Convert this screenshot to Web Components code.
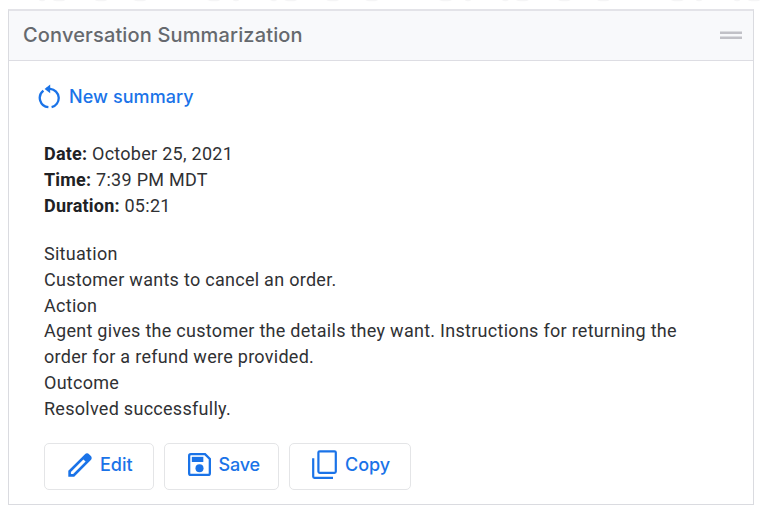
<!DOCTYPE html>
<html lang="en">
<head>
<meta charset="utf-8">
<title>Conversation Summarization</title>
<style>
html,body{margin:0;width:760px;height:512px;overflow:hidden;background:#fff}
</style>
</head>
<body>
<summary-page></summary-page>
<script>
const define = (name, html) => customElements.define(name, class extends HTMLElement {
  constructor() {
    super();
    const t = document.createElement('template');
    t.innerHTML = html;
    this.attachShadow({mode: 'open'}).append(t.content.cloneNode(true));
  }
});

define('dot-edge', `
<style>:host{display:block;height:9px}svg{display:block}</style>
<svg width="760" height="9"><defs><pattern id="d" width="231.7" height="9" patternUnits="userSpaceOnUse">
<g fill="#f5f5f6"><ellipse cx="42" rx="3" ry="1.3"/><ellipse cx="59" rx="6" ry="1.3"/><ellipse cx="101" rx="6" ry="1.3"/><ellipse cx="140" rx="6" ry="1.3"/><ellipse cx="214" rx="6" ry="1.3"/></g></pattern></defs>
<rect x="20" width="740" height="9" fill="url(#d)"/><g fill="#f5f5f6"><ellipse cx="236" rx="3" ry="1.3"/><ellipse cx="468" rx="3" ry="1.3"/><ellipse cx="699" rx="3" ry="1.3"/></g></svg>`);

define('panel-header', `
<style>
:host{display:flex;justify-content:space-between;align-items:center;height:49px;padding:0 11px 0 14px;background:#f8f9fb;border-bottom:1px solid #dddde3;box-sizing:content-box}
h1{margin:0;font:500 20px/49px Inter,"Liberation Sans",sans-serif;color:#66696e;letter-spacing:.15px}
.grip{display:grid;gap:2px;width:22px;margin-bottom:2px}
i{box-sizing:border-box;height:3px;background:#c1c1c7;border-top:1px solid #dcdde1}
</style>
<h1><slot></slot></h1><div class="grip"><i></i><i></i></div>`);

define('new-summary', `
<style>
:host{display:flex;align-items:center;height:26px;gap:8px;font:500 18px/26px Inter,"Liberation Sans",sans-serif;color:#1a73e8;letter-spacing:.08px}
svg{display:block}
</style>
<svg width="23" height="26" viewBox="0 0 23 26" fill="none" stroke="#1a73e8" stroke-width="2.3"><path d="M5.4 6.6A9.3 9.3 0 0 0 10.4 23.2M13.6 23.2A9.3 9.3 0 0 0 12.2 4.9H8"/><path d="M12.2.6V9.2L6.6 4.9Z" fill="#1a73e8" stroke="none"/></svg>
<span><slot></slot></span>`);

define('summary-line', `
<style>:host{display:block;height:25.75px;line-height:25.75px;white-space:nowrap}</style>
<slot></slot>`);

define('action-button', `
<style>
:host{display:flex;box-sizing:border-box;height:47px;border:1.5px solid #e4e5e7;border-radius:5px;align-items:center;font:500 18px/26px Inter,"Liberation Sans",sans-serif;color:#1a73e8}
.label{margin-bottom:3px;white-space:nowrap}
::slotted(svg){display:block;margin-bottom:3px}
</style>
<slot name="icon"></slot><span class="label"><slot></slot></span>`);

define('summary-page', `
<style>
:host{display:block;width:760px;height:512px}
.panel{box-sizing:border-box;width:746px;height:496px;margin-left:8px;border:1px solid #dadbe0;border-top:2px solid #e3e3e8}
.new{margin:23px 0 0 29px}
.text{margin:31.4px 0 0 35px;font:400 18px/25.75px Roboto,"Liberation Sans",sans-serif;color:#303134;letter-spacing:.28px}
.gap{margin-top:22.4px}
b{letter-spacing:.2px;color:#202124}
.actions{display:flex;gap:10px;margin:21.7px 0 0 35px}
.edit{width:110px;padding-left:23px;gap:8px}
.save{width:115px;padding-left:23px;gap:7.5px;letter-spacing:-.2px}
.copy{width:122px;padding-left:22px;gap:8px}
</style>
<dot-edge></dot-edge>
<div class="panel">
<panel-header>Conversation Summarization</panel-header>
<new-summary class="new">New summary</new-summary>
<div class="text">
<summary-line><b>Date:</b> October 25, 2021</summary-line>
<summary-line><b>Time:</b> 7:39 PM MDT</summary-line>
<summary-line><b>Duration:</b> 05:21</summary-line>
<summary-line class="gap">Situation</summary-line>
<summary-line>Customer wants to cancel an order.</summary-line>
<summary-line>Action</summary-line>
<summary-line>Agent gives the customer the details they want. Instructions for returning the</summary-line>
<summary-line>order for a refund were provided.</summary-line>
<summary-line>Outcome</summary-line>
<summary-line>Resolved successfully.</summary-line>
</div>
<div class="actions">
<action-button class="edit"><svg slot="icon" width="24" height="24" viewBox="0 0 24 24"><path fill="#1a73e8" fill-rule="evenodd" d="M.3 17.8V23.7H6.2L22.6 7.3Q24.8 4.9 22.6 2.7L21.3 1.4Q19.1-.8 16.7 1.4ZM15.4 6.4 17.6 8.6 5.1 21.1H2.9V18.9Z"/></svg>Edit</action-button>
<action-button class="save"><svg slot="icon" width="23" height="23" viewBox="0 0 24 24"><path d="M1.2 3Q1.2 1.2 3 1.2H17.8L22.8 6.2V21Q22.8 22.8 21 22.8H3Q1.2 22.8 1.2 21Z" fill="none" stroke="#1a73e8" stroke-width="2.4"/><path d="M4 4H16V9.4H4Z" fill="#1a73e8"/><circle cx="12" cy="16" r="4.2" fill="#1a73e8"/></svg>Save</action-button>
<action-button class="copy"><svg slot="icon" width="25" height="29" viewBox="0 0 25 29" fill="none" stroke="#1a73e8" stroke-width="2.2"><rect x="6.4" y="1.3" width="17.4" height="21.6" rx="1.3"/><path d="M1.2 8.2V26.6Q1.2 27.8 2.4 27.8H21"/></svg>Copy</action-button>
</div>
</div>`);
</script>
</body>
</html>
